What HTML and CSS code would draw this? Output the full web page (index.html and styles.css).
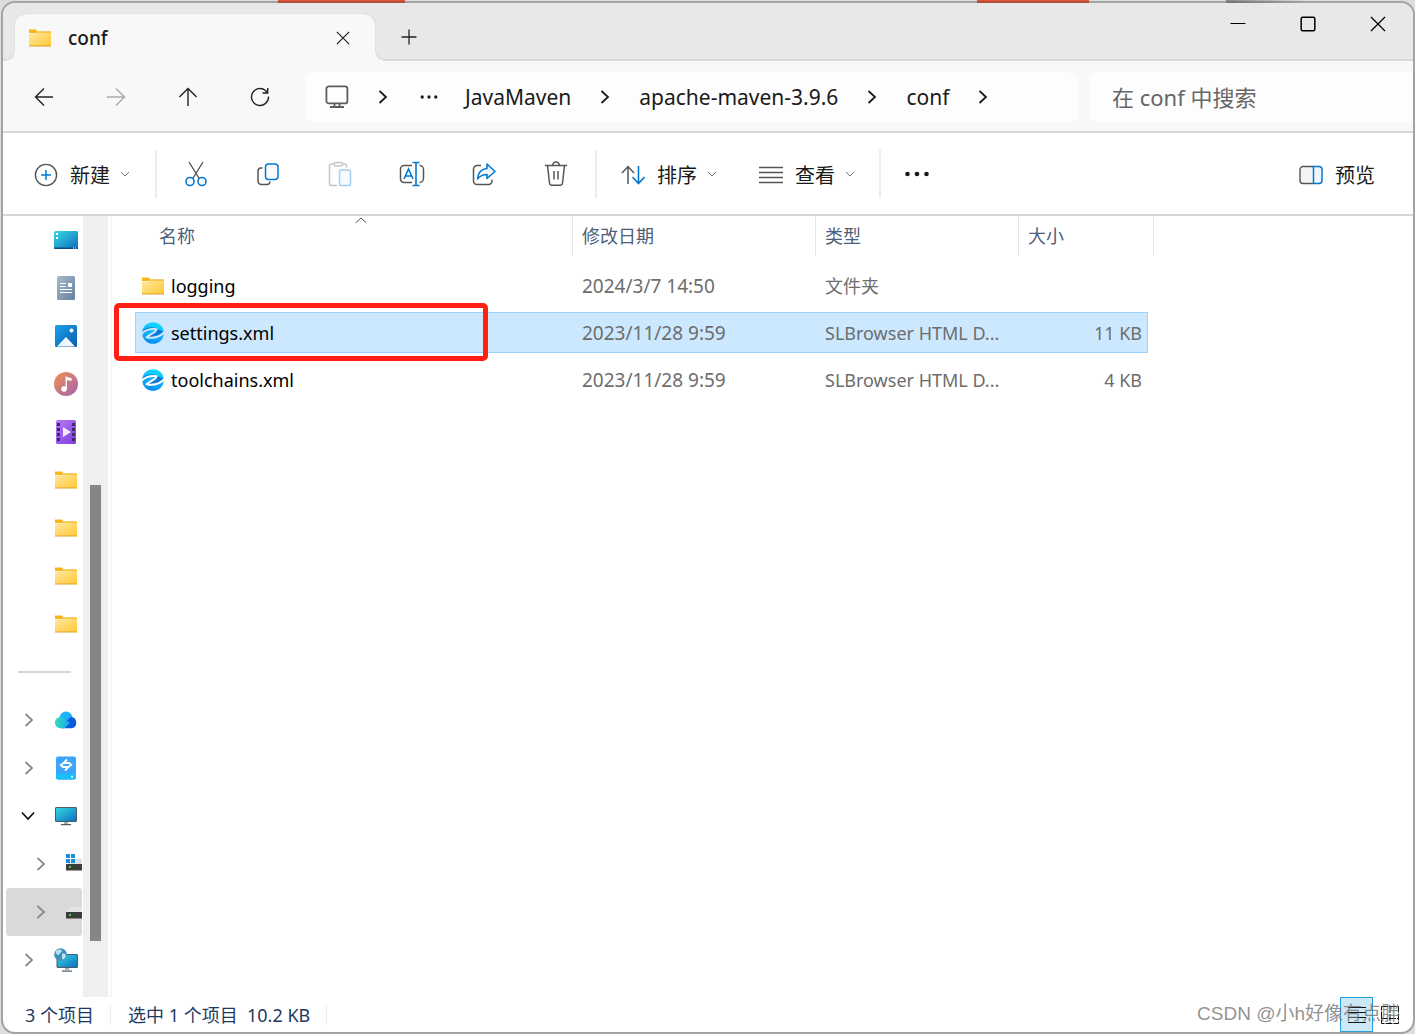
FILE: index.html
```html
<!DOCTYPE html>
<html lang="zh-CN">
<head>
<meta charset="utf-8">
<meta name="viewport" content="width=device-width, initial-scale=1">
<title>conf</title>
<link rel="stylesheet" href="styles.css">
</head>
<body>
<svg width="0" height="0" class="defs" aria-hidden="true">
  <defs>
    <linearGradient id="gFolder" x1="0" y1="0" x2="1" y2="1"><stop offset="0" stop-color="#ffe9a6"/><stop offset="1" stop-color="#ffc933"/></linearGradient>
    <linearGradient id="gTeal" x1="0" y1="0" x2="1" y2="1"><stop offset="0" stop-color="#35dbe0"/><stop offset="1" stop-color="#0f6cc0"/></linearGradient>
    <linearGradient id="gDoc" x1="0" y1="0" x2="1" y2="1"><stop offset="0" stop-color="#a9bace"/><stop offset="1" stop-color="#64809f"/></linearGradient>
    <linearGradient id="gPic" x1="0" y1="0" x2="1" y2="1"><stop offset="0" stop-color="#1ba2ea"/><stop offset="1" stop-color="#0b5cae"/></linearGradient>
    <linearGradient id="gMusic" x1="0" y1="0" x2="1" y2="1"><stop offset="0" stop-color="#f58f4e"/><stop offset="1" stop-color="#a062b4"/></linearGradient>
    <linearGradient id="gVideo" x1="0" y1="0" x2="1" y2="1"><stop offset="0" stop-color="#b77cf3"/><stop offset="1" stop-color="#7d3be0"/></linearGradient>
    <linearGradient id="gCloud" x1="0" y1="0" x2="1" y2="0"><stop offset="0" stop-color="#35e0b8"/><stop offset="1" stop-color="#17a5ef"/></linearGradient>
    <linearGradient id="gEdge" x1="0.6" y1="0" x2="0.4" y2="1"><stop offset="0" stop-color="#0fdcff"/><stop offset="1" stop-color="#0a8cf5"/></linearGradient>
    <mask id="mEdge" maskUnits="userSpaceOnUse" x="0" y="0" width="24" height="24"><rect width="24" height="24" fill="#fff"/><path d="M0 13.500C3.500 9.500 8 7.500 15.500 8.200 15.500 11 10 12.800 5.500 16.200 12 17.500 19 16 24 10.500" fill="none" stroke="#000" stroke-width="2" stroke-linejoin="round"/></mask>
    <symbol id="folder" viewBox="0 0 24 18"><path d="M1 .5h7l1 1.500v2H1z" fill="#f9b616"/><path d="M1 4.500h6.500l1.500-2h14V17H1z" fill="url(#gFolder)"/><path d="M9 2.500h14v1H8.500z" fill="#eead1c"/><path d="M1 16.500h22v1H1z" fill="#e0a01c"/></symbol>
    <symbol id="browser" viewBox="0 0 24 24"><g mask="url(#mEdge)"><circle cx="12" cy="12" r="10.800" fill="url(#gEdge)"/><path d="M16 8.500c4 .5 5.500 2 6.500 2.500-4 4-10 5.500-16 5 4.500-3 9-4.500 9.500-7.500z" fill="#0a76dc"/><path d="M2 9c3-3 8-3.500 13-2L1.500 13z" fill="#0a86e6"/></g></symbol>
    <symbol id="right" viewBox="0 0 12 16"><path d="M2.500 2 9 8l-6.500 6" fill="none" stroke="currentColor" stroke-width="1.800"/></symbol>
    <symbol id="down" viewBox="0 0 12 8"><path d="M2 2l4 4 4-4" fill="none" stroke="#777" stroke-width="1"/></symbol>
    <symbol id="dots" viewBox="0 0 28 8"><g fill="currentColor"><circle cx="4.500" cy="4" r="2.300"/><circle cx="14" cy="4" r="2.300"/><circle cx="23.500" cy="4" r="2.300"/></g></symbol>
    <symbol id="x" viewBox="0 0 16 16"><path d="M1 1 15 15M15 1 1 15" stroke="currentColor" stroke-width="1.300"/></symbol>
  </defs>
</svg>

<div class="desktop">
  <div class="desktop-top" aria-hidden="true"><i class="bar"></i><i class="bar"></i><i class="shade"></i></div>
  <div class="window">
    <header class="titlebar">
      <div class="tab">
        <svg class="i24x18"><use href="#folder"/></svg>
        <span class="tab-title">conf</span>
        <button class="plain tab-close" aria-label="关闭标签页"><svg width="14" height="14"><use href="#x"/></svg></button>
      </div>
      <button class="plain new-tab" aria-label="新标签页"><svg width="16" height="16" viewBox="0 0 16 16"><path d="M8 .5v15M.5 8h15" stroke="#222" stroke-width="1.300"/></svg></button>
      <div class="controls">
        <button class="plain" aria-label="最小化"><svg width="16" height="16"><path d="M.5 7.500h15" stroke="#000"/></svg></button>
        <button class="plain" aria-label="最大化"><svg width="16" height="16"><rect x="1.200" y="1.200" width="13.600" height="13.600" rx="1.500" fill="none" stroke="#000" stroke-width="1.500"/></svg></button>
        <button class="plain" aria-label="关闭"><svg width="16" height="16"><use href="#x"/></svg></button>
      </div>
    </header>

    <nav class="navbar">
      <div class="history">
        <button class="plain" aria-label="后退"><svg width="20" height="20" viewBox="0 0 20 20"><path d="M19 10H1.500M10 1.500 1.500 10l8.500 8.500" fill="none" stroke="#222" stroke-width="1.400"/></svg></button>
        <button class="plain" aria-label="前进" disabled><svg width="20" height="20" viewBox="0 0 20 20"><path d="M1 10h17.500M10 1.500l8.500 8.500-8.500 8.500" fill="none" stroke="#aaa" stroke-width="1.400"/></svg></button>
        <button class="plain" aria-label="向上"><svg width="20" height="20" viewBox="0 0 20 20"><path d="M10 19V1.500M1.500 10 10 1.500l8.500 8.500" fill="none" stroke="#222" stroke-width="1.400"/></svg></button>
        <button class="plain" aria-label="刷新"><svg width="20" height="20" viewBox="0 0 20 20"><path d="M18.500 9.500a8.500 8.500 0 1 1-3-6l2 2.200M17.700 1v5H12.500" fill="none" stroke="#222" stroke-width="1.400"/></svg></button>
      </div>
      <div class="address">
        <svg width="24" height="24" viewBox="0 0 24 24"><g fill="none" stroke="#5c5c5c" stroke-width="1.800"><rect x="1.400" y="1.400" width="21" height="17" rx="2.500"/><path d="M9.500 18.500v3M14.500 18.500v3M5 22h14"/></g></svg>
        <svg class="chev first"><use href="#right"/></svg>
        <button class="plain" aria-label="更多路径"><svg width="20" height="6"><use href="#dots"/></svg></button>
        <a href="#">JavaMaven</a>
        <svg class="chev"><use href="#right"/></svg>
        <a href="#">apache-maven-3.9.6</a>
        <svg class="chev"><use href="#right"/></svg>
        <a href="#">conf</a>
        <svg class="chev"><use href="#right"/></svg>
      </div>
      <input class="search" type="search" aria-label="在 conf 中搜索" placeholder="在 conf 中搜索">
    </nav>

    <div class="toolbar">
      <button class="plain cmd cmd-new"><svg width="24" height="24" viewBox="0 0 24 24"><circle cx="12" cy="12" r="10.600" fill="none" stroke="#555" stroke-width="1.400"/><path d="M12 7v10M7 12h10" stroke="#0078d4" stroke-width="1.500"/></svg><span>新建</span><svg class="caret"><use href="#down"/></svg></button>
      <div class="group">
        <button class="plain tool" aria-label="剪切"><svg width="24" height="26" viewBox="0 0 24 26"><path d="M5 1l10.500 17M19 1 8.500 18" stroke="#555" stroke-width="1.400"/><g fill="none" stroke="#0078d4" stroke-width="1.600"><circle cx="6" cy="20.500" r="4"/><circle cx="18" cy="20.500" r="4"/></g></svg></button>
        <button class="plain tool" aria-label="复制"><svg width="24" height="24" viewBox="0 0 24 24"><path d="M6.500 6H5a3 3 0 0 0-3 3v10a3.500 3.500 0 0 0 3.500 3.500H11a3 3 0 0 0 3-3" fill="none" stroke="#555" stroke-width="1.500"/><rect x="9.500" y="2" width="12.500" height="15.500" rx="3" fill="#f9fbff" stroke="#0078d4" stroke-width="1.500"/></svg></button>
        <button class="plain tool" aria-label="粘贴" disabled><svg width="24" height="26" viewBox="0 0 24 26"><path d="M9 24.500H3.500a2 2 0 0 1-2-2V5a2 2 0 0 1 2-2H6m8 0h2.500a2 2 0 0 1 2 2v1.500" fill="none" stroke="#c4c4c4" stroke-width="1.500"/><rect x="6" y="1.500" width="8.500" height="3.500" rx="1.700" fill="none" stroke="#c4c4c4" stroke-width="1.400"/><rect x="11.500" y="9" width="11" height="15.500" rx="1.500" fill="#f7fbff" stroke="#a5cff0" stroke-width="1.500"/></svg></button>
        <button class="plain tool" aria-label="重命名"><svg width="26" height="26" viewBox="0 0 26 26"><path d="M13 21.500H5A3.500 3.500 0 0 1 1.500 18V8A3.500 3.500 0 0 1 5 4.500h8M20.500 4.500a4 4 0 0 1 4 4v9a4 4 0 0 1-4 4" fill="none" stroke="#555" stroke-width="1.500"/><path d="M5 18 9.500 8 14 18M6.500 15h6M13.500 1.500h7M17 1.500v23M13.500 24.500h7" fill="none" stroke="#0078d4" stroke-width="1.600"/></svg></button>
        <button class="plain tool" aria-label="共享"><svg width="24" height="24" viewBox="0 0 24 24"><path d="M9 3.500H5a3.500 3.500 0 0 0-3.500 3.500v12A3.500 3.500 0 0 0 5 22.500h11.500a3.500 3.500 0 0 0 3.500-3.500v-1.500" fill="none" stroke="#555" stroke-width="1.500"/><path d="M15 2l8 7.500-8 7v-4c-4.500 0-7 1.500-9.500 4.500.5-6 3.500-10 9.500-10.500z" fill="#f7fbff" stroke="#0078d4" stroke-width="1.600" stroke-linejoin="round"/></svg></button>
        <button class="plain tool" aria-label="删除"><svg width="24" height="26" viewBox="0 0 24 26"><g fill="none" stroke="#555" stroke-width="1.500"><path d="M1 4.500h22M8.500 4.500a3.500 3.500 0 0 1 7 0M3.500 4.500l2 17.500a2.500 2.500 0 0 0 2.500 2.200h8a2.500 2.500 0 0 0 2.500-2.200l2-17.500M10 10v8.500M14 10v8.500"/></g></svg></button>
      </div>
      <div class="group group-view">
        <button class="plain cmd"><svg width="24" height="20" viewBox="0 0 24 20"><path d="M7 19V1.500M1 8l6-6.500L13 8" fill="none" stroke="#555" stroke-width="1.500"/><path d="M17.500 1v17.500M11.500 12l6 6.500 6-6.500" fill="none" stroke="#0078d4" stroke-width="1.600"/></svg><span>排序</span><svg class="caret"><use href="#down"/></svg></button>
        <button class="plain cmd"><svg width="24" height="20" viewBox="0 0 24 20"><path d="M0 2.500h24M0 7.500h24M0 12.500h24M0 17.500h24" stroke="#555" stroke-width="1.300"/></svg><span>查看</span><svg class="caret"><use href="#down"/></svg></button>
      </div>
      <button class="plain more" aria-label="查看更多"><svg width="28" height="8"><use href="#dots"/></svg></button>
      <button class="plain cmd preview"><svg width="24" height="20" viewBox="0 0 24 20"><path d="M14 1.500H4A3 3 0 0 0 1 4.500v11a3 3 0 0 0 3 3h10" fill="#f4f4f4" stroke="#555" stroke-width="1.400"/><path d="M14.500 1.500H20a3 3 0 0 1 3 3v11a3 3 0 0 1-3 3h-5.500z" fill="#eef7ff" stroke="#0078d4" stroke-width="1.500"/></svg><span>预览</span></button>
    </div>

    <div class="body">
      <aside class="side">
        <ul class="tree">
          <li><svg width="24" height="18" viewBox="0 0 24 18"><rect width="24" height="18" rx="1.500" fill="url(#gTeal)"/><path d="M0 16.500h24v.5a1 1 0 0 1-1 1H1a1 1 0 0 1-1-1z" fill="#0b4a86"/><path d="M2 2h2v2H2zM2 6h2v2H2zM19 16.500h1v1h-1zM21 16.500h1v1h-1z" fill="#fff"/></svg></li>
          <li><svg width="24" height="24" viewBox="0 0 24 24"><rect x="3" width="18" height="24" rx="1.500" fill="url(#gDoc)"/><path d="M6 7.500h6M6 10.500h6M6 13.500h12M6 16.500h12" stroke="#fff" stroke-width="1.200"/><path d="M14 7h4v4h-4z" fill="#fff"/></svg></li>
          <li><svg width="24" height="24" viewBox="0 0 24 24"><rect x="1" y="1" width="22" height="22" rx="1.500" fill="url(#gPic)"/><path d="M3 22.500 12 13l9 9.500z" fill="#f2f8ff"/><circle cx="17.500" cy="6.500" r="2" fill="#fff"/></svg></li>
          <li><svg width="24" height="24" viewBox="0 0 24 24"><circle cx="12" cy="12" r="12" fill="url(#gMusic)"/><circle cx="10" cy="17" r="2.800" fill="#fff"/><path d="M11.500 17V4c2 2 4 1.500 6 2v3c-1.500-.5-3-.3-4.500-1v9z" fill="#fff"/></svg></li>
          <li><svg width="24" height="24" viewBox="0 0 24 24"><rect x="2" width="20" height="24" rx="1.500" fill="url(#gVideo)"/><path d="M3 3h3v3H3zM3 8h3v3H3zM3 13h3v3H3zM3 18h3v3H3zM18 3h3v3h-3zM18 8h3v3h-3zM18 13h3v3h-3zM18 18h3v3h-3z" fill="#3b2c68"/><path d="M9 7l8 5-8 5z" fill="#f1e9fc"/></svg></li>
          <li><svg class="i24x18"><use href="#folder"/></svg></li>
          <li><svg class="i24x18"><use href="#folder"/></svg></li>
          <li><svg class="i24x18"><use href="#folder"/></svg></li>
          <li><svg class="i24x18"><use href="#folder"/></svg></li>
          <li class="rule"><hr></li>
          <li><svg class="twist"><use href="#right"/></svg><svg width="24" height="18" viewBox="0 0 24 18"><circle cx="12" cy="7" r="6.500" fill="#1cb4f7"/><path d="M12.500 9.500 17 6a5.700 5.700 0 0 1 .5 11.300H7z" fill="#0a5be0"/><path d="M6.500 17.300a5.600 5.600 0 1 1 3.500-10L16 12l-5.500 5.300z" fill="url(#gCloud)"/></svg></li>
          <li><svg class="twist"><use href="#right"/></svg><svg width="24" height="24" viewBox="0 0 24 24"><rect x="2" y="0.500" width="20" height="23" rx="2" fill="#3ba4fb"/><path d="M2 18h20v3.500a2 2 0 0 1-2 2H4a2 2 0 0 1-2-2z" fill="#18c0f7"/><circle cx="18" cy="20.800" r="1" fill="#fff"/><path d="M13 3.500 9.500 7H15l3 2.500M11 14.500l3.500-3.500H9L6 8.500M9.500 7 6.500 9.500M14.500 11l3-2.500" fill="none" stroke="#fff" stroke-width="1.800"/></svg></li>
          <li><svg class="twist open" viewBox="0 0 16 12"><path d="M2 2.500 8 9l6-6.500" fill="none" stroke="#111" stroke-width="1.700"/></svg><svg width="24" height="20" viewBox="0 0 24 20"><rect x="1.500" y="1.500" width="21" height="14" rx=".5" fill="url(#gTeal)" stroke="#4d5d6b"/><path d="M10 16h4v2h-4z" fill="#a7b1b8"/><path d="M7 18h10v1.200H7z" fill="#4d5d6b"/></svg></li>
          <li class="sub"><svg class="twist"><use href="#right"/></svg><svg width="24" height="20" viewBox="0 0 24 20"><path d="M9 5h12l3 5H1z" fill="#dcdfe3"/><path d="M0 10h24v6.500H0z" fill="#3c3c3c"/><path d="M3 12h2v2H3z" fill="#2fdc34"/><path d="M0 0h4v4H0zM5 0h4v4H5zM0 5h4v4H0zM5 5h4v4H5z" fill="#1390e0"/></svg></li>
          <li class="sub current"><svg class="twist"><use href="#right"/></svg><svg width="24" height="20" viewBox="0 0 24 20"><path d="M4 5h20v6H0z" fill="#e3e5e9"/><path d="M0 10h24v6.500H0z" fill="#3c3c3c"/><path d="M3 12h2v2H3z" fill="#2fdc34"/></svg></li>
          <li><svg class="twist"><use href="#right"/></svg><svg width="24" height="24" viewBox="0 0 24 24"><rect x="3" y="6.500" width="20.500" height="13" rx=".5" fill="url(#gTeal)" stroke="#4d5d6b"/><path d="M11 20h4v2h-4z" fill="#a7b1b8"/><path d="M8 22.500h10v1.200H8z" fill="#4d5d6b"/><circle cx="6.500" cy="6.500" r="6.300" fill="#3f91bd"/><path d="M2 3c2-2 5-2 6 0-1 2-3 2-3 4-2 0-4-2-3-4zM8 6c2-1 4 0 4 2-1 3-3 4-4 3z" fill="#b8e2f0"/></svg></li>
        </ul>
        <div class="scrollbar"><div class="thumb"></div></div>
      </aside>

      <main class="files">
        <table>
          <colgroup><col><col class="c-date"><col class="c-type"><col class="c-size"><col class="c-end"></colgroup>
          <thead>
            <tr><th scope="col" class="name">名称<svg class="sorted" viewBox="0 0 12 7"><path d="M.5 6 6 1l5.500 5" fill="none" stroke="#555"/></svg></th><th scope="col">修改日期</th><th scope="col">类型</th><th scope="col" class="open-end">大小</th><td></td></tr>
          </thead>
          <tbody>
            <tr><td class="name"><span class="file"><svg class="i24x18"><use href="#folder"/></svg>logging</span></td><td class="date">2024/3/7 14:50</td><td>文件夹</td><td class="size"></td><td></td></tr>
            <tr class="selected"><td class="name"><span class="file"><svg class="i24"><use href="#browser"/></svg>settings.xml</span><span class="marker"></span></td><td class="date">2023/11/28 9:59</td><td>SLBrowser HTML D...</td><td class="size">11 KB</td><td></td></tr>
            <tr><td class="name"><span class="file"><svg class="i24"><use href="#browser"/></svg>toolchains.xml</span></td><td class="date">2023/11/28 9:59</td><td>SLBrowser HTML D...</td><td class="size">4 KB</td><td></td></tr>
          </tbody>
        </table>
      </main>
    </div>

    <footer class="status">
      <span class="count">3 个项目</span>
      <span class="chosen">选中 1 个项目&nbsp; 10.2 KB</span>
      <div class="views">
        <button class="plain active" aria-label="详细信息"><svg width="20" height="18" viewBox="0 0 20 18"><path d="M1 1.500h18M1 6.500h18M1 11.500h18M1 16.500h18" stroke="#111"/></svg></button>
        <button class="plain" aria-label="大图标"><svg width="20" height="20" viewBox="0 0 20 20"><path d="M1.500 1.500h17v17h-17zM10 1v18M1 13.500h18" fill="none" stroke="#111" stroke-dasharray="7 1"/></svg></button>
      </div>
      <span class="watermark">CSDN @小h好像有点胖</span>
    </footer>
  </div>
</div>
</body>
</html>
```
FILE: styles.css
```css
* { box-sizing: border-box; }

body {
  margin: 0;
  font-family: "Noto Sans", "Noto Sans CJK SC", sans-serif;
  font-size: 18px;
  line-height: 28px;
  color: #1a1a1a;
}

svg { display: block; flex: none; }
.defs { position: absolute; }

.plain {
  display: flex;
  align-items: center;
  justify-content: center;
  border: 0;
  padding: 0;
  background: none;
  color: inherit;
  font: inherit;
}

.i24 { width: 24px; height: 24px; }
.i24x18 { width: 24px; height: 18px; }

/* desktop behind the window */
.desktop {
  position: relative;
  display: flex;
  min-height: 100vh;
  padding: 1px 0 0 1px;
  background: #dcdfde;
}

.desktop-top {
  position: absolute;
  inset: 0 0 auto;
  display: grid;
  grid-template-columns: 278fr 127fr 572fr 112fr 137fr 80fr 109fr;
  height: 3px;
}
.bar { grid-column: 2; background: #ea4f30; }
.bar + .bar { grid-column: 4; }
.shade { grid-column: 6; background: linear-gradient(90deg, #8a8a8a, #dcdfde); }

.window {
  position: relative;
  display: flex;
  flex: 1;
  flex-direction: column;
  min-width: 0;
  overflow: hidden;
  border: 2px solid rgba(90, 90, 90, 0.45);
  border-radius: 14px;
  background: #fff;
  background-clip: padding-box;
}

/* tabs */
.titlebar {
  display: flex;
  height: 58px;
  background: #e8e8e8;
  box-shadow: inset 0 -2px #d9d9d9;
}
.tab {
  position: relative;
  display: flex;
  align-items: center;
  width: 360px;
  margin: 11px 0 0 12px;
  padding: 0 25px 0 13px;
  border-radius: 12px 12px 0 0;
  background: #f8f8f8;
  box-shadow: 0 0 0 1px #e0e0e0;
  clip-path: inset(-1px -8px 0 -8px);
}
/* flared feet of the tab */
.tab::before, .tab::after {
  content: "";
  position: absolute;
  bottom: 0;
  width: 8px;
  height: 8px;
}
.tab::before {
  right: 100%;
  background: radial-gradient(circle at 0 0, #e8e8e8 5px, #d9d9d9 6px, #f8f8f8 8px);
}
.tab::after {
  left: 100%;
  background: radial-gradient(circle at 100% 0, #e8e8e8 5px, #d9d9d9 6px, #f8f8f8 8px);
}
.tab-title { margin-left: 16px; font-size: 19px; font-weight: 500; }
.tab-close { margin-left: auto; }
.new-tab { width: 68px; height: 44px; margin-top: 12px; }
.controls { display: flex; margin-left: auto; }
.controls .plain { width: 70px; height: 41px; color: #000; }

/* address row */
.navbar {
  display: flex;
  align-items: center;
  gap: 11px;
  height: 72px;
  padding: 1px 0 0 5px;
  border-bottom: 2px solid #d6d6d6;
  background: #f8f8f8;
}
.history { display: flex; width: 286px; }
.history .plain { width: 72px; height: 48px; flex: none; }
.address {
  display: flex;
  flex: 1;
  align-items: center;
  min-width: 0;
  height: 50px;
  padding-left: 20px;
  border-radius: 8px;
  background: #fdfdfd;
  font-size: 21px;
}
.address a { color: inherit; text-decoration: none; white-space: nowrap; }
.address .chev { width: 12px; height: 16px; margin: 0 28px; }
.address .first { margin-right: 30px; }
.address .plain { margin-right: 26px; }
.search {
  width: 324px;
  height: 50px;
  padding: 0 23px;
  border: 0;
  border-radius: 8px 0 0 8px;
  background: #fdfdfd;
  font: inherit;
  font-size: 22px;
}
.search::placeholder { color: #666; opacity: 1; }

/* commands */
.toolbar {
  display: flex;
  align-items: center;
  height: 83px;
  padding: 0 38px 0 31px;
  border-bottom: 2px solid #d6d6d6;
  font-size: 20px;
}
.cmd { white-space: nowrap; }
.cmd > svg:first-child { margin-top: 3px; }
.cmd > span { margin: 5px 9px 0 12px; }
.caret { width: 12px; height: 8px; }
.cmd-new { margin-right: 24px; }
.group {
  display: flex;
  align-items: center;
  height: 48px;
  padding: 0 3px;
  border-left: 2px solid #ececec;
  border-right: 2px solid #ececec;
}
.group-view { gap: 41px; padding: 0 23px 0 24px; border-left: 0; }
.tool { width: 72px; height: 48px; }
.more { margin-left: 22px; }
.preview { margin-left: auto; }
.preview > span { margin-right: 0; }

/* body */
.body { display: flex; flex: 1; }
.side {
  display: flex;
  flex: none;
  width: 109px;
  border-right: 2px solid #f7f7f7;
}
.tree {
  width: 79px;
  margin: 0;
  padding: 0 0 0 3px;
  list-style: none;
  overflow: hidden;
}
.tree li {
  display: flex;
  align-items: center;
  justify-content: flex-end;
  gap: 19px;
  height: 48px;
  padding-right: 4px;
}
.tree .sub { justify-content: flex-start; padding: 0 0 0 29px; }
.tree .current { background: #d9d9d9; border-radius: 3px; }
.tree .rule { justify-content: flex-start; padding-left: 12px; }
.rule hr { width: 53px; margin: 0; border: 0; border-top: 2px solid #d6d6d6; }
.twist { width: 12px; height: 16px; color: #8a8a8a; }
.twist.open { width: 16px; height: 12px; margin-right: -1px; }

.scrollbar {
  display: grid;
  grid-template-rows: 269fr 456fr 56fr;
  width: 25px;
  margin-left: 1px;
  padding: 0 7px;
  background: #efefef;
}
.thumb { grid-row: 2; background: #858585; }

.files { flex: 1; min-width: 0; padding: 0 24px 0 23px; }
table {
  width: 1019px;
  margin-top: -6px;
  border-collapse: separate;
  border-spacing: 0 6px;
  table-layout: fixed;
}
.c-date { width: 243px; }
.c-type { width: 203px; }
.c-size { width: 129px; }
.c-end { width: 6px; }
th, td { padding: 0 0 0 9px; text-align: left; white-space: nowrap; }
th, thead td {
  height: 43px;
  padding-bottom: 3px;
  background: linear-gradient(#e5e5e5, #e5e5e5) right top / 1px 40px no-repeat;
  color: #4c607a;
  font-weight: 400;
}
.open-end { background: none; }
tr > :last-child { padding: 0; }
tbody td { height: 41px; border: solid transparent; border-width: 1px 0; color: #6d6d6d; }
.name { position: relative; }
th.name { padding-left: 24px; }
td.name { padding-left: 6px; color: #000; }
td.size { padding-right: 6px; text-align: right; }
td.date { font-size: 19px; }
.sorted { position: absolute; top: 1px; left: 220px; width: 12px; height: 7px; }
.file { display: flex; align-items: center; gap: 6px; }
.selected td:not(:last-child) { border-color: #99d1ff; background: #cce8ff; }
.selected td.name { border-left-width: 1px; padding-left: 5px; }
.selected td.size { border-right-width: 1px; padding-right: 5px; }

/* red frame drawn round the chosen file */
.marker {
  position: absolute;
  top: -10px;
  left: -22px;
  width: 374px;
  height: 58px;
  border: 5px solid #ff1f13;
  border-radius: 5px;
}

/* status bar */
.status {
  position: relative;
  display: flex;
  align-items: center;
  height: 35px;
  padding-left: 22px;
  color: #1e3a62;
  line-height: 20px;
}
.count, .chosen { padding-right: 16px; border-right: 1px solid #ececec; }
.chosen { margin-left: 17px; }
.views { display: flex; height: 35px; margin-left: auto; padding-right: 7px; }
.views .plain { width: 33px; }
.views .active { border: 1px solid #26a0da; background: #cce8f6; }
.watermark {
  position: absolute;
  right: 13px;
  bottom: 8px;
  color: rgba(110, 110, 110, 0.75);
  font-family: "Liberation Sans", "Noto Sans CJK SC", sans-serif;
  font-size: 19px;
}
```
